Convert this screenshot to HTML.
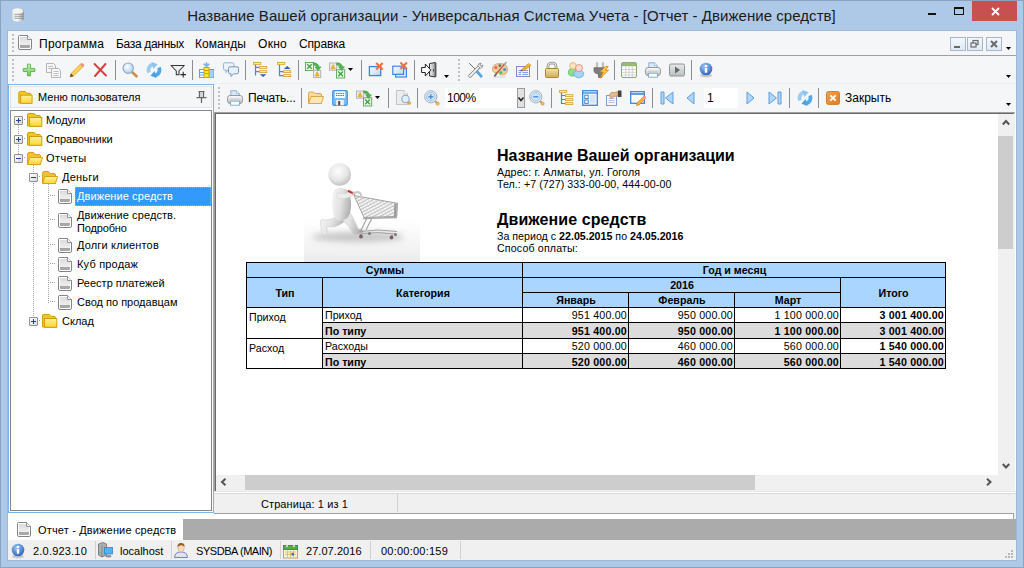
<!DOCTYPE html>
<html lang="ru"><head><meta charset="utf-8"><title>Универсальная Система Учета</title>
<style>
html,body{margin:0;padding:0}
html{background:#aec9e8}
body{width:1024px;height:568px;overflow:hidden;position:relative;background:#aec9e8;font-family:"Liberation Sans",sans-serif;color:#000}
.a{position:absolute}
.t{position:absolute;white-space:nowrap;line-height:1}
svg{overflow:visible}
#title{left:0;top:8px;width:1023px;text-align:center;font-size:15px;color:#1a1a1a;letter-spacing:0.05px}
.menu{font-size:12px}
.ui{font-size:11px}
.sep{position:absolute;width:1px;background:#8d8d8d}
.grip{position:absolute;width:2px;background:repeating-linear-gradient(to bottom,#c2c2c2 0,#c2c2c2 2px,transparent 2px,transparent 4px)}
.r{font-size:10.67px}
.rb{font-size:10.67px;font-weight:bold}
.cell{position:absolute;box-sizing:border-box;font-size:10.67px;line-height:12px;overflow:hidden;white-space:nowrap}
.dot-v{position:absolute;width:1px;background:repeating-linear-gradient(to bottom,#a0a0a0 0,#a0a0a0 1px,transparent 1px,transparent 2px)}
.dot-h{position:absolute;height:1px;background:repeating-linear-gradient(to right,#a0a0a0 0,#a0a0a0 1px,transparent 1px,transparent 2px)}
.exp{position:absolute;width:7px;height:7px;border:1px solid #919191;background:linear-gradient(135deg,#fff,#d8d8d8);border-radius:1px}
</style></head><body>
<svg width="0" height="0" style="position:absolute"><defs>
<linearGradient id="gFold" x1="0" y1="0" x2="0" y2="1"><stop offset="0" stop-color="#fff29a"/><stop offset="1" stop-color="#ffd52e"/></linearGradient>
<linearGradient id="gDoc" x1="0" y1="0" x2="0" y2="1"><stop offset="0" stop-color="#dcdcdc"/><stop offset="1" stop-color="#f6f6f6"/></linearGradient>
<linearGradient id="gBlue" x1="0" y1="0" x2="0" y2="1"><stop offset="0" stop-color="#8fc1f2"/><stop offset="1" stop-color="#2f76c9"/></linearGradient>
<linearGradient id="gWin" x1="0" y1="0" x2="1" y2="1"><stop offset="0" stop-color="#ffffff"/><stop offset="1" stop-color="#b8d4f2"/></linearGradient>
<linearGradient id="gLock" x1="0" y1="0" x2="0" y2="1"><stop offset="0" stop-color="#f3e2a4"/><stop offset="1" stop-color="#cfae55"/></linearGradient>
<linearGradient id="gPrn" x1="0" y1="0" x2="0" y2="1"><stop offset="0" stop-color="#fbfbfb"/><stop offset="0.5" stop-color="#e4e4e4"/><stop offset="1" stop-color="#b4b4b4"/></linearGradient>
<linearGradient id="gGreen" x1="0" y1="0" x2="0" y2="1"><stop offset="0" stop-color="#c9f0b8"/><stop offset="1" stop-color="#6cc95a"/></linearGradient>
<radialGradient id="gInfo" cx="0.4" cy="0.3" r="0.8"><stop offset="0" stop-color="#9cc6f5"/><stop offset="1" stop-color="#2458b8"/></radialGradient>
<radialGradient id="gLens" cx="0.4" cy="0.35" r="0.7"><stop offset="0" stop-color="#ffffff"/><stop offset="1" stop-color="#9fd2f6"/></radialGradient>
<linearGradient id="gGray" x1="0" y1="0" x2="0" y2="1"><stop offset="0" stop-color="#e6e9e8"/><stop offset="1" stop-color="#b9bfbd"/></linearGradient>
</defs></svg>
<div class="a" style="left:0px;top:0px;width:1022px;height:566px;border:1px solid #8aa3c4"></div>
<div class="a" style="left:7px;top:30px;width:1008px;height:529px;border:1px solid #9db8d9"></div>
<svg class="a" style="left:12px;top:8px" width="12" height="14" viewBox="0 0 12 14"><defs><linearGradient id="gDb" x1="0" y1="0" x2="1" y2="0"><stop offset="0" stop-color="#e4e4e4"/><stop offset="0.45" stop-color="#fbfbfb"/><stop offset="0.8" stop-color="#c9c9c9"/><stop offset="1" stop-color="#8e8e8e"/></linearGradient></defs><path d="M0.300 2.800 Q0.300 0.300 6 0.300 Q11.700 0.300 11.700 2.800 L11.700 11 Q11.700 13.500 6 13.500 Q0.300 13.500 0.300 11 Z" fill="url(#gDb)"/><path d="M2.500 6.300 H11 M2.500 8.300 H11 M2.500 10.300 H11" stroke="#777" stroke-width="0.800" opacity="0.850"/><ellipse cx="6" cy="3" rx="5.300" ry="2.300" fill="#f4f4f4" opacity="0.900"/></svg>
<div class="t" id="title">Название Вашей организации - Универсальная Система Учета - [Отчет - Движение средств]</div>
<div class="a" style="left:928px;top:13px;width:8px;height:2px;background:#111"></div>
<div class="a" style="left:954px;top:7px;width:8px;height:5px;border:1px solid #111;border-top-width:2px"></div>
<div class="a" style="left:972px;top:1px;width:45px;height:20px;background:#c75050"></div>
<svg class="a" style="left:990.5px;top:7px" width="9" height="9" viewBox="0 0 9 9"><path d="M1 1 L8 8 M8 1 L1 8" stroke="#fff" stroke-width="1.800"/></svg>
<div class="a" style="left:8px;top:31px;width:1008px;height:529px;background:#f0f0f0"></div>
<div class="a" style="left:8px;top:31px;width:1008px;height:24px;background:#f5f6f7"></div>
<div class="a" style="left:8px;top:55px;width:1008px;height:1px;background:#a0a0a0"></div>
<div class="grip" style="left:12px;top:34px;height:18px"></div>
<svg class="a" style="left:18px;top:35px" width="14" height="15" viewBox="0 0 14 15"><path d="M1.5 0.5 L9.5 0.5 L13.5 4.5 L13.5 13 Q13.5 14.5 12 14.5 L2 14.5 Q0.5 14.5 0.5 13 L0.5 1.5 Q0.5 0.5 1.5 0.5 Z" fill="#fff" stroke="#767676" stroke-width="0.900"/><path d="M2 2 L9 2 L9 5 L12 5 L12 13 L2 13 Z" fill="url(#gDoc)"/><path d="M9.5 0.5 L9.5 4.5 L13.5 4.5" fill="#fff" stroke="#777" stroke-width="0.8"/><rect x="2.5" y="10.5" width="9" height="2" fill="#aaa" stroke="#8a8a8a" stroke-width="0.6"/></svg>
<div class="t menu" style="left:39px;top:38px;;letter-spacing:0.25px">Программа</div>
<div class="t menu" style="left:116px;top:38px;;letter-spacing:-0.32px">База данных</div>
<div class="t menu" style="left:195px;top:38px;">Команды</div>
<div class="t menu" style="left:258px;top:38px;;letter-spacing:0.3px">Окно</div>
<div class="t menu" style="left:299px;top:38px;;letter-spacing:-0.15px">Справка</div>
<div class="a" style="left:950px;top:37px;width:14px;height:12px;border:1px solid #a9b7c9;background:linear-gradient(#f4f8fc,#dde9f6)"></div>
<svg class="a" style="left:950px;top:37px" width="16" height="14" viewBox="0 0 16 14"><rect x="4" y="9" width="6" height="2" fill="#6a6a6a"/></svg>
<div class="a" style="left:967px;top:37px;width:14px;height:12px;border:1px solid #a9b7c9;background:linear-gradient(#f4f8fc,#dde9f6)"></div>
<svg class="a" style="left:967px;top:37px" width="16" height="14" viewBox="0 0 16 14"><rect x="6" y="3.500" width="5" height="4" fill="none" stroke="#6a6a6a" stroke-width="1.200"/><rect x="4" y="6" width="5" height="4" fill="#e6eef8" stroke="#6a6a6a" stroke-width="1.200"/></svg>
<div class="a" style="left:986px;top:37px;width:14px;height:12px;border:1px solid #a9b7c9;background:linear-gradient(#f4f8fc,#dde9f6)"></div>
<svg class="a" style="left:986px;top:37px" width="16" height="14" viewBox="0 0 16 14"><path d="M5 4 L11 10 M11 4 L5 10" stroke="#6a6a6a" stroke-width="2"/></svg>
<svg class="a" style="left:1006px;top:47px" width="5" height="3" viewBox="0 0 5 3"><path d="M0 0 H5 L2.500 3 Z" fill="#000"/></svg>
<div class="a" style="left:8px;top:56px;width:1008px;height:28px;background:#f5f6f7"></div>
<div class="grip" style="left:12px;top:59px;height:22px"></div>
<svg class="a" style="left:21px;top:62px" width="16" height="16" viewBox="0 0 16 16"><path d="M6.200 1.500 Q8 0.800 9.800 1.500 L9.800 6.200 L14.500 6.200 Q15.200 8 14.500 9.800 L9.800 9.800 L9.800 14.500 Q8 15.200 6.200 14.500 L6.200 9.800 L1.500 9.800 Q0.800 8 1.500 6.200 L6.200 6.200 Z" fill="url(#gGreen)" stroke="#4aa83f" stroke-width="0.900" transform="translate(1 1) scale(0.875)"/></svg>
<svg class="a" style="left:45px;top:62px" width="16" height="16" viewBox="0 0 16 16"><path d="M1.5 1.5 L8.5 1.5 L10.5 3.5 L10.5 10.5 L1.5 10.5 Z" fill="#f6f6f6" stroke="#b4b4b4"/><path d="M3 4.5H8M3 6.500H8" stroke="#c0c0c0"/><path d="M6.500 6.500 L13.5 6.500 L15.5 8.500 L15.5 15.5 L6.500 15.5 Z" fill="#f9f9f9" stroke="#b4b4b4"/><path d="M8.500 9.500H13.5M8.500 11.5H13.5M8.500 13.5H13.5" stroke="#bdbdbd"/></svg>
<svg class="a" style="left:69px;top:62px" width="16" height="16" viewBox="0 0 16 16"><path d="M1 15 L2 11.600 L11.800 1.800 Q13.100 1 14.200 2.100 Q15.100 3.200 14.300 4.400 L4.500 14.100 Z" fill="#f9d35a" stroke="#dba52e" stroke-width="0.800"/><path d="M11.800 1.800 Q13.100 1 14.200 2.100 Q15.100 3.200 14.300 4.400 L13.500 5.200 L11 2.600 Z" fill="#ef9090"/><path d="M1 15 L2 11.600 L4.500 14.100 Z" fill="#4a4a4a"/></svg>
<svg class="a" style="left:92px;top:62px" width="16" height="16" viewBox="0 0 16 16"><path d="M2.500 2 L14 13.500 M13.500 2 L3 14" stroke="#d23f3f" stroke-width="1.900" stroke-linecap="round"/></svg>
<div class="sep" style="left:115px;top:60px;height:20px"></div>
<svg class="a" style="left:122px;top:62px" width="16" height="16" viewBox="0 0 16 16"><path d="M9.500 9.500 L14.500 14.300" stroke="#c98f4a" stroke-width="2.600" stroke-linecap="round"/><circle cx="6.200" cy="6.200" r="5.200" fill="url(#gLens)" stroke="#9aa9c4" stroke-width="1.200"/></svg>
<svg class="a" style="left:146px;top:62px" width="16" height="16" viewBox="0 0 16 16"><path d="M3 10.500 A5.400 5.400 0 0 1 7 2.700" stroke="#9bcdf3" stroke-width="3.800" fill="none"/><path d="M5.500 0 L11.500 2.200 L7.500 7 Z" fill="#8ac4f1"/><path d="M13 5.500 A5.400 5.400 0 0 1 9 13.300" stroke="#52a9ea" stroke-width="3.800" fill="none"/><path d="M10.500 16 L4.500 13.800 L8.500 9 Z" fill="#46a2e8"/></svg>
<svg class="a" style="left:170px;top:62px" width="16" height="16" viewBox="0 0 16 16"><path d="M1 3.500 L14.300 3.500 L9 9 L9 12.800 L6.300 12.800 L6.300 9 Z" fill="#f0f0f0" stroke="#333" stroke-width="1.050" stroke-linejoin="round"/><path d="M10.400 12.600H16M13.200 9.800V15.400" stroke="#2b2b2b" stroke-width="1.100"/></svg>
<div class="sep" style="left:192px;top:60px;height:20px"></div>
<svg class="a" style="left:199px;top:62px" width="16" height="16" viewBox="0 0 16 16"><rect x="0.500" y="7.500" width="14" height="8" fill="#fff" stroke="#5aa0e8"/><path d="M0.500 10.500H14.500M0.500 13H14.500M10 7.500V15.500" stroke="#5aa0e8"/><rect x="10.500" y="8" width="4" height="7.500" fill="#9fd0f5"/><rect x="5" y="5.500" width="5" height="10" fill="#ffe23d" stroke="#d6a400"/><path d="M5 8.500H10M5 11.500H10" stroke="#d6a400"/><path d="M7.500 0 V3 M4.500 2 L7.500 5 L10.500 2 Z" fill="#7fb2e6" stroke="#7fb2e6" stroke-width="1"/></svg>
<svg class="a" style="left:223px;top:62px" width="16" height="16" viewBox="0 0 16 16"><path d="M1.500 0.800 L9.500 0.800 Q11 0.800 11 2.300 L11 6.500 Q11 8 9.500 8 L5 8 L3 10.500 L3 8 L1.500 8 Q0.500 8 0.500 6.500 L0.500 2.300 Q0.500 0.800 1.500 0.800Z" fill="#eef4fb" stroke="#8fb0d8"/><path d="M7 4.800 L14 4.800 Q15.500 4.800 15.500 6.300 L15.500 10.300 Q15.500 11.800 14 11.800 L10.500 11.800 L8 14.500 L8 11.800 L7 11.800 Q5.500 11.800 5.500 10.300 L5.500 6.300 Q5.500 4.800 7 4.800Z" fill="#e8f0fa" stroke="#7398c9"/></svg>
<div class="sep" style="left:245px;top:60px;height:20px"></div>
<svg class="a" style="left:253px;top:62px" width="16" height="16" viewBox="0 0 16 16"><path d="M2.500 2.600 V13.600 M2.500 5.400 H6 M2.500 9.600 H6" stroke="#4a86d8" stroke-width="1.200" fill="none"/><rect x="0.45" y="0.45" width="7.300" height="1.900" fill="#fdf0c4" stroke="#dca93a" stroke-width="0.900"/><rect x="6.45" y="4.45" width="7.300" height="1.900" fill="#fdf0c4" stroke="#dca93a" stroke-width="0.900"/><rect x="6.45" y="8.649999999999999" width="7.300" height="1.900" fill="#fdf0c4" stroke="#dca93a" stroke-width="0.900"/><path d="M6.800 12.200 L13.400 12.200 L10.100 15 Z" fill="#2f62b8"/></svg>
<svg class="a" style="left:277px;top:62px" width="16" height="16" viewBox="0 0 16 16"><path d="M2.500 2.600 V13.600 H6 M2.500 9.600 H6" stroke="#4a86d8" stroke-width="1.200" fill="none"/><rect x="0.45" y="0.45" width="7.300" height="1.900" fill="#fdf0c4" stroke="#dca93a" stroke-width="0.900"/><rect x="6.45" y="8.649999999999999" width="7.300" height="1.900" fill="#fdf0c4" stroke="#dca93a" stroke-width="0.900"/><rect x="6.45" y="12.649999999999999" width="7.300" height="1.900" fill="#fdf0c4" stroke="#dca93a" stroke-width="0.900"/><path d="M6.800 6.900 L13.600 6.900 L10.200 4 Z" fill="#2f62b8"/></svg>
<div class="sep" style="left:298px;top:60px;height:20px"></div>
<svg class="a" style="left:305px;top:62px" width="16" height="16" viewBox="0 0 16 16"><rect x="0.5" y="0.5" width="8" height="8" fill="#eef8ec" stroke="#55a555" stroke-width="0.900"/><path d="M2.2 2.2 L6.8 6.8 M6.8 2.2 L2.2 6.8" stroke="#4a9f4a" stroke-width="1.400"/><rect x="8.5" y="8.3" width="7.2" height="7.2" fill="#ececec" stroke="#b5b5b5"/><path d="M12.1 9.8 L14.2 14.0 L10 14.0 Z" fill="#f2b632" stroke="#d99a1a" stroke-width="0.600"/><path d="M8.300 0.800 Q12.800 0.800 14.200 5 L16 5 L13 8.700 L10 5 L11.800 5 Q11 2.900 8.300 2.900 Z" fill="#56b552" stroke="#3a983a" stroke-width="0.600"/></svg>
<svg class="a" style="left:329px;top:62px" width="16" height="16" viewBox="0 0 16 16"><rect x="0.5" y="1.0" width="7.2" height="7.2" fill="#ececec" stroke="#b5b5b5"/><path d="M4.1 2.5 L6.2 6.7 L2 6.7 Z" fill="#f2b632" stroke="#d99a1a" stroke-width="0.600"/><rect x="7.5" y="7.8" width="8.2" height="8.2" fill="#eef8ec" stroke="#55a555" stroke-width="0.900"/><path d="M9.2 9.5 L14.0 14.3 M14.0 9.5 L9.2 14.3" stroke="#4a9f4a" stroke-width="1.400"/><path d="M7.800 0.800 Q12.300 0.800 13.700 4.800 L15.400 4.800 L12.500 8.400 L9.600 4.800 L11.300 4.800 Q10.500 2.900 7.800 2.900 Z" fill="#56b552" stroke="#3a983a" stroke-width="0.600"/></svg>
<div class="sep" style="left:361px;top:60px;height:20px"></div>
<svg class="a" style="left:368px;top:62px" width="16" height="16" viewBox="0 0 16 16"><rect x="1.400" y="4.600" width="11.300" height="9" fill="url(#gWin)" stroke="#3f86e0" stroke-width="1.300"/><path d="M8.2 1 L14.7 7.5 M14.7 1 L8.2 7.5" stroke="#e8714c" stroke-width="2"/></svg>
<svg class="a" style="left:392px;top:62px" width="16" height="16" viewBox="0 0 16 16"><rect x="3.600" y="6.800" width="10.800" height="8.200" fill="#e4effb" stroke="#3f86e0" stroke-width="1.200"/><rect x="0.800" y="4.200" width="10.800" height="8.200" fill="url(#gWin)" stroke="#3f86e0" stroke-width="1.200"/><path d="M8.4 0.5 L14.9 7.0 M14.9 0.5 L8.4 7.0" stroke="#e8714c" stroke-width="2"/></svg>
<div class="sep" style="left:414px;top:60px;height:20px"></div>
<svg class="a" style="left:421px;top:62px" width="16" height="16" viewBox="0 0 16 16"><defs><linearGradient id="gDoor" x1="0" y1="0" x2="1" y2="0"><stop offset="0" stop-color="#f2f2f2"/><stop offset="1" stop-color="#9c9c9c"/></linearGradient></defs><path d="M8.500 1.600 L14.300 0.500 L14.300 15 L8.500 14 Z" fill="url(#gDoor)" stroke="#333" stroke-width="1"/><path d="M14.300 0.500 L15 1.300 L15 14.300 L14.300 15" fill="#777" stroke="#333" stroke-width="0.700"/><rect x="12" y="7.200" width="1" height="2.200" fill="#444"/><path d="M0.600 5.500 L4.300 5.500 L4.300 2 L9.800 8 L4.300 14 L4.300 10.500 L0.600 10.500 Z" fill="#fff" stroke="#222" stroke-width="1" stroke-linejoin="miter"/></svg>
<div class="grip" style="left:458px;top:59px;height:22px"></div>
<svg class="a" style="left:468px;top:62px" width="16" height="16" viewBox="0 0 16 16"><path d="M1.500 1.500 L8.500 8.500" stroke="#6a6a6a" stroke-width="1" stroke-linecap="round"/><path d="M8.800 9.300 L13.200 14.200" stroke="#5ba3e6" stroke-width="2.800" stroke-linecap="round"/><path d="M2 14 L11.300 4.700" stroke="#808080" stroke-width="3.400" stroke-linecap="round"/><path d="M2 14 L11.300 4.700" stroke="#f6f6f6" stroke-width="1.800" stroke-linecap="round"/><path d="M9.800 3.800 Q10.300 1 13.200 1.200 L11.800 3 L13 4.300 L14.900 3 Q15 5.800 12.300 6.300 Z" fill="#f4f4f4" stroke="#808080" stroke-width="0.800"/></svg>
<svg class="a" style="left:492px;top:62px" width="16" height="16" viewBox="0 0 16 16"><path d="M8 1.500 Q15.500 1.500 15.500 7.500 Q15.500 13 9.500 13 Q7.300 13 7.300 11.500 Q7.300 10 5.300 10.500 Q0.500 11.500 0.500 7 Q0.500 1.500 8 1.500 Z" fill="#f0cc96" stroke="#c39a62" stroke-width="0.700"/><circle cx="3.800" cy="5.600" r="1.500" fill="#ee5a6a"/><circle cx="7.800" cy="3.600" r="1.400" fill="#6a6f7a"/><circle cx="12.600" cy="7.500" r="1.600" fill="#4a8fe6"/><circle cx="8.800" cy="10.500" r="1.500" fill="#4cc04c"/><circle cx="4" cy="9" r="1.200" fill="#f2e24a"/><path d="M14 0.300 L4.500 11.500" stroke="#c05a4a" stroke-width="1.300"/><path d="M14.500 0 L12.500 2.300" stroke="#b5b5b5" stroke-width="1.800"/><path d="M4.800 11 L2.300 14.800" stroke="#6a6a6a" stroke-width="1.800"/><path d="M2 15 H14" stroke="#c8c8c8" stroke-width="0.800"/></svg>
<svg class="a" style="left:516px;top:62px" width="16" height="16" viewBox="0 0 16 16"><rect x="0.500" y="4.500" width="13" height="10" fill="#f4f4ff" stroke="#8a86d0"/><path d="M2.500 8.500H5M6.500 8.500H12M2.500 10.500H5M6.500 10.500H12M2.500 12.500H5M6.500 12.500H12" stroke="#7f9fe0"/><path d="M5 8 L12.500 1.500 L15 3.500 L7 9 Z" fill="#f3b62e" stroke="#c8861a" stroke-width="0.700"/><path d="M4.200 9.200 L5 8 L7 9 Z" fill="#2a2ad0"/></svg>
<div class="sep" style="left:537px;top:60px;height:20px"></div>
<svg class="a" style="left:544px;top:62px" width="16" height="16" viewBox="0 0 16 16"><path d="M4 7.500 L4 4.500 Q4 1 8 1 Q12 1 12 4.500 L12 7.500" fill="none" stroke="#8c8c8c" stroke-width="2.600"/><path d="M4 7.500 L4 4.500 Q4 1 8 1 Q12 1 12 4.500 L12 7.500" fill="none" stroke="#e8e8e8" stroke-width="1.100"/><rect x="1.500" y="6.500" width="13" height="9" rx="1" fill="url(#gLock)" stroke="#a8853a"/></svg>
<svg class="a" style="left:568px;top:62px" width="16" height="16" viewBox="0 0 16 16"><ellipse cx="4.500" cy="10.300" rx="4.200" ry="3.800" fill="#8fdc88" stroke="#56b454" stroke-width="0.700"/><circle cx="5" cy="3.900" r="3.300" fill="#fbe6c4" stroke="#e6a55c" stroke-width="0.800"/><ellipse cx="10.800" cy="12" rx="5" ry="3.800" fill="#a9d2f8" stroke="#5a9be2" stroke-width="0.700"/><circle cx="11" cy="6" r="3.500" fill="#fcdcd4" stroke="#e8846e" stroke-width="0.800"/></svg>
<svg class="a" style="left:593px;top:62px" width="16" height="16" viewBox="0 0 16 16"><path d="M4 0.500 V6 M10 0.500 V6" stroke="#9a9a9a" stroke-width="2.200"/><path d="M4 0.800 V6 M10 0.800 V6" stroke="#ececec" stroke-width="0.900"/><path d="M1 5.800 L13 5.800 L13 8.500 Q13 11.500 9 12 L9 15.500 L5.500 15.500 L5.500 12 Q1 11.500 1 8.500 Z" fill="#7d7d7d" stroke="#5a5a5a" stroke-width="0.700"/><path d="M12.300 4.500 L7.300 10 L10.300 10 L7.500 15.800 L15.500 8.300 L12.300 8.300 L15.200 4.500 Z" fill="#ffd23f" stroke="#ee8420" stroke-width="0.900"/></svg>
<div class="sep" style="left:614px;top:60px;height:20px"></div>
<svg class="a" style="left:621px;top:62px" width="16" height="16" viewBox="0 0 16 16"><rect x="0.500" y="0.500" width="15" height="15" rx="1.500" fill="#fff" stroke="#7f9f62" stroke-width="0.900"/><path d="M0.800 2 Q0.800 0.800 2 0.800 L14 0.800 Q15.200 0.800 15.200 2 L15.200 4.300 L0.800 4.300 Z" fill="#98b87c"/><path d="M1 7.500H15M1 10.300H15M1 13H15M4.700 4.300V15M8 4.300V15M11.300 4.300V15" stroke="#cdcdcd" stroke-width="0.900"/></svg>
<svg class="a" style="left:645px;top:62px" width="16" height="16" viewBox="0 0 16 16"><path d="M3.800 6 L3.800 0.800 L9.500 0.800 L12.200 3.500 L12.200 6" fill="#dbe8f8" stroke="#7aa7e0" stroke-width="0.900"/><path d="M9.500 0.800 L9.500 3.500 L12.200 3.500" fill="#f6f9fd" stroke="#7aa7e0" stroke-width="0.600"/><rect x="0.600" y="5.500" width="14.800" height="8" rx="2.400" fill="url(#gPrn)" stroke="#8e8e8e" stroke-width="0.900"/><path d="M2.500 9.300 H13.500" stroke="#d0d0d0" stroke-width="1.400"/><rect x="3.600" y="11.200" width="8.800" height="4" fill="#fff" stroke="#7aa7e0" stroke-width="0.900"/></svg>
<svg class="a" style="left:669px;top:62px" width="16" height="16" viewBox="0 0 16 16"><rect x="0.500" y="2" width="15" height="12" rx="1.500" fill="url(#gGray)" stroke="#8c9694"/><path d="M6 4.500 L11 8 L6 11.500 Z" fill="#5f6b6a"/></svg>
<div class="sep" style="left:691px;top:60px;height:20px"></div>
<svg class="a" style="left:698px;top:62px" width="16" height="16" viewBox="0 0 16 16"><ellipse cx="8" cy="13.500" rx="6" ry="1.800" fill="#b5b5b5" opacity="0.700"/><circle cx="8" cy="7" r="6.300" fill="url(#gInfo)"/><rect x="6.800" y="3" width="2.400" height="2" rx="0.500" fill="#fff"/><rect x="6.800" y="6" width="2.400" height="4.800" rx="0.500" fill="#fff"/></svg>
<svg class="a" style="left:348px;top:68px" width="5" height="3" viewBox="0 0 5 3"><path d="M0 0 H5 L2.500 3 Z" fill="#000"/></svg>
<svg class="a" style="left:444px;top:75px" width="5" height="3" viewBox="0 0 5 3"><path d="M0 0 H5 L2.500 3 Z" fill="#000"/></svg>
<svg class="a" style="left:1006px;top:75px" width="5" height="3" viewBox="0 0 5 3"><path d="M0 0 H5 L2.500 3 Z" fill="#000"/></svg>
<div class="a" style="left:214px;top:83px;width:802px;height:1px;background:#ebecee"></div>
<div class="a" style="left:8px;top:84px;width:204px;height:427px;border:1px solid #7eb4ea;background:#fbfcfd"></div>
<div class="a" style="left:10px;top:86px;width:200px;height:20px;border:1px solid #e2e4e7;background:#f5f6f7"></div>
<svg class="a" style="left:18px;top:90.5px" width="15.5" height="13" viewBox="0 0 16 14"><path d="M0.500 13 L0.500 2 Q0.500 0.500 2 0.500 L7.300 0.500 L9.300 2.500 L12.500 2.500 Q13.500 2.500 13.500 3.500 L13.500 13 Z" fill="#f3c526" stroke="#cf9e08"/><rect x="2.500" y="4.500" width="12.300" height="8.800" fill="url(#gFold)" stroke="#cf9e08"/></svg>
<div class="t ui" style="left:38px;top:92px;">Меню пользователя</div>
<svg class="a" style="left:196px;top:91px" width="11" height="13" viewBox="0 0 11 13"><path d="M2.500 0.500 H8.500 M3.500 0.500 V6 M7.500 0.500 V6 M0.500 6.500 H10.500 M5.500 6.500 V12" stroke="#666" stroke-width="1.250" fill="none"/><rect x="4" y="1" width="3" height="5" fill="#d5d5d5"/></svg>
<div class="a" style="left:10px;top:110px;width:200px;height:399px;border:1px solid #828790;background:#fff"></div>
<div class="dot-v" style="left:18px;top:125px;height:29px"></div>
<div class="dot-h" style="left:24px;top:119px;width:2px"></div>
<div class="dot-h" style="left:24px;top:138px;width:2px"></div>
<div class="dot-h" style="left:24px;top:157px;width:2px"></div>
<div class="exp" style="left:14px;top:116px"></div>
<div class="a" style="left:16px;top:120px;width:5px;height:1px;background:#2a3f9a"></div>
<div class="a" style="left:18px;top:118px;width:1px;height:5px;background:#2a3f9a"></div>
<svg class="a" style="left:27px;top:113px" width="16" height="14" viewBox="0 0 16 14"><path d="M0.500 13 L0.500 2 Q0.500 0.500 2 0.500 L7.300 0.500 L9.300 2.500 L12.500 2.500 Q13.500 2.500 13.500 3.500 L13.500 13 Z" fill="#f3c526" stroke="#cf9e08"/><rect x="2.500" y="4.500" width="12.300" height="8.800" fill="url(#gFold)" stroke="#cf9e08"/></svg>
<div class="t ui" style="left:46px;top:115px;">Модули</div>
<div class="exp" style="left:14px;top:135px"></div>
<div class="a" style="left:16px;top:139px;width:5px;height:1px;background:#2a3f9a"></div>
<div class="a" style="left:18px;top:137px;width:1px;height:5px;background:#2a3f9a"></div>
<svg class="a" style="left:27px;top:132px" width="16" height="14" viewBox="0 0 16 14"><path d="M0.500 13 L0.500 2 Q0.500 0.500 2 0.500 L7.300 0.500 L9.300 2.500 L12.500 2.500 Q13.500 2.500 13.500 3.500 L13.500 13 Z" fill="#f3c526" stroke="#cf9e08"/><rect x="2.500" y="4.500" width="12.300" height="8.800" fill="url(#gFold)" stroke="#cf9e08"/></svg>
<div class="t ui" style="left:46px;top:134px;">Справочники</div>
<div class="exp" style="left:14px;top:154px"></div>
<div class="a" style="left:16px;top:158px;width:5px;height:1px;background:#2a3f9a"></div>
<svg class="a" style="left:27px;top:151px" width="16" height="14" viewBox="0 0 16 14"><path d="M0.5 3.5 Q0.5 1.5 2 1.5 L6 1.5 Q7.2 1.5 7.5 3 L7.7 3.5 L12 3.5 Q13.5 3.5 13.5 5 L13.5 13.5 L0.5 13.5 Z" fill="#f3c234" stroke="#d9a21b"/><path d="M2.8 6.5 L15.6 6.5 L13.4 13.5 L0.6 13.5 Z" fill="url(#gFold)" stroke="#d9a21b"/></svg>
<div class="t ui" style="left:46px;top:153px;;letter-spacing:0.41px">Отчеты</div>
<div class="dot-v" style="left:33px;top:165px;height:152px"></div>
<div class="dot-h" style="left:39px;top:176px;width:2px"></div>
<div class="dot-h" style="left:39px;top:320px;width:2px"></div>
<div class="exp" style="left:29px;top:173px"></div>
<div class="a" style="left:31px;top:177px;width:5px;height:1px;background:#2a3f9a"></div>
<svg class="a" style="left:42px;top:170px" width="16" height="14" viewBox="0 0 16 14"><path d="M0.5 3.5 Q0.5 1.5 2 1.5 L6 1.5 Q7.2 1.5 7.5 3 L7.7 3.5 L12 3.5 Q13.5 3.5 13.5 5 L13.5 13.5 L0.5 13.5 Z" fill="#f3c234" stroke="#d9a21b"/><path d="M2.8 6.5 L15.6 6.5 L13.4 13.5 L0.6 13.5 Z" fill="url(#gFold)" stroke="#d9a21b"/></svg>
<div class="t ui" style="left:62px;top:172px;;letter-spacing:0.24px">Деньги</div>
<div class="exp" style="left:29px;top:317px"></div>
<div class="a" style="left:31px;top:321px;width:5px;height:1px;background:#2a3f9a"></div>
<div class="a" style="left:33px;top:319px;width:1px;height:5px;background:#2a3f9a"></div>
<svg class="a" style="left:42px;top:314px" width="16" height="14" viewBox="0 0 16 14"><path d="M0.500 13 L0.500 2 Q0.500 0.500 2 0.500 L7.300 0.500 L9.300 2.500 L12.500 2.500 Q13.500 2.500 13.500 3.500 L13.500 13 Z" fill="#f3c526" stroke="#cf9e08"/><rect x="2.500" y="4.500" width="12.300" height="8.800" fill="url(#gFold)" stroke="#cf9e08"/></svg>
<div class="t ui" style="left:62px;top:316px;">Склад</div>
<div class="dot-v" style="left:48px;top:184px;height:119px"></div>
<div class="a" style="left:75px;top:187px;width:136px;height:19px;background:#3399ff;outline:1px dotted #d9a05a;outline-offset:-1px"></div>
<div class="dot-h" style="left:50px;top:195px;width:6px"></div>
<svg class="a" style="left:58px;top:189px" width="14" height="15" viewBox="0 0 14 15"><path d="M1.5 0.5 L9.5 0.5 L13.5 4.5 L13.5 13 Q13.5 14.5 12 14.5 L2 14.5 Q0.5 14.5 0.5 13 L0.5 1.5 Q0.5 0.5 1.5 0.5 Z" fill="#fff" stroke="#767676" stroke-width="0.900"/><path d="M2 2 L9 2 L9 5 L12 5 L12 13 L2 13 Z" fill="url(#gDoc)"/><path d="M9.5 0.5 L9.5 4.5 L13.5 4.5" fill="#fff" stroke="#777" stroke-width="0.8"/><rect x="2.5" y="10.5" width="9" height="2" fill="#aaa" stroke="#8a8a8a" stroke-width="0.6"/></svg>
<div class="t ui" style="left:77px;top:191px;color:#fff;letter-spacing:0.09px">Движение средств</div>
<div class="dot-h" style="left:50px;top:219px;width:6px"></div>
<svg class="a" style="left:58px;top:213px" width="14" height="15" viewBox="0 0 14 15"><path d="M1.5 0.5 L9.5 0.5 L13.5 4.5 L13.5 13 Q13.5 14.5 12 14.5 L2 14.5 Q0.5 14.5 0.5 13 L0.5 1.5 Q0.5 0.5 1.5 0.5 Z" fill="#fff" stroke="#767676" stroke-width="0.900"/><path d="M2 2 L9 2 L9 5 L12 5 L12 13 L2 13 Z" fill="url(#gDoc)"/><path d="M9.5 0.5 L9.5 4.5 L13.5 4.5" fill="#fff" stroke="#777" stroke-width="0.8"/><rect x="2.5" y="10.5" width="9" height="2" fill="#aaa" stroke="#8a8a8a" stroke-width="0.6"/></svg>
<div class="t ui" style="left:77px;top:210px;letter-spacing:0.09px">Движение средств.</div>
<div class="t ui" style="left:77px;top:223px;;letter-spacing:-0.15px">Подробно</div>
<div class="dot-h" style="left:50px;top:244px;width:6px"></div>
<svg class="a" style="left:58px;top:238px" width="14" height="15" viewBox="0 0 14 15"><path d="M1.5 0.5 L9.5 0.5 L13.5 4.5 L13.5 13 Q13.5 14.5 12 14.5 L2 14.5 Q0.5 14.5 0.5 13 L0.5 1.5 Q0.5 0.5 1.5 0.5 Z" fill="#fff" stroke="#767676" stroke-width="0.900"/><path d="M2 2 L9 2 L9 5 L12 5 L12 13 L2 13 Z" fill="url(#gDoc)"/><path d="M9.5 0.5 L9.5 4.5 L13.5 4.5" fill="#fff" stroke="#777" stroke-width="0.8"/><rect x="2.5" y="10.5" width="9" height="2" fill="#aaa" stroke="#8a8a8a" stroke-width="0.6"/></svg>
<div class="t ui" style="left:77px;top:240px;;letter-spacing:0.16px">Долги клиентов</div>
<div class="dot-h" style="left:50px;top:263px;width:6px"></div>
<svg class="a" style="left:58px;top:257px" width="14" height="15" viewBox="0 0 14 15"><path d="M1.5 0.5 L9.5 0.5 L13.5 4.5 L13.5 13 Q13.5 14.5 12 14.5 L2 14.5 Q0.5 14.5 0.5 13 L0.5 1.5 Q0.5 0.5 1.5 0.5 Z" fill="#fff" stroke="#767676" stroke-width="0.900"/><path d="M2 2 L9 2 L9 5 L12 5 L12 13 L2 13 Z" fill="url(#gDoc)"/><path d="M9.5 0.5 L9.5 4.5 L13.5 4.5" fill="#fff" stroke="#777" stroke-width="0.8"/><rect x="2.5" y="10.5" width="9" height="2" fill="#aaa" stroke="#8a8a8a" stroke-width="0.6"/></svg>
<div class="t ui" style="left:77px;top:259px;;letter-spacing:0.19px">Куб продаж</div>
<div class="dot-h" style="left:50px;top:282px;width:6px"></div>
<svg class="a" style="left:58px;top:276px" width="14" height="15" viewBox="0 0 14 15"><path d="M1.5 0.5 L9.5 0.5 L13.5 4.5 L13.5 13 Q13.5 14.5 12 14.5 L2 14.5 Q0.5 14.5 0.5 13 L0.5 1.5 Q0.5 0.5 1.5 0.5 Z" fill="#fff" stroke="#767676" stroke-width="0.900"/><path d="M2 2 L9 2 L9 5 L12 5 L12 13 L2 13 Z" fill="url(#gDoc)"/><path d="M9.5 0.5 L9.5 4.5 L13.5 4.5" fill="#fff" stroke="#777" stroke-width="0.8"/><rect x="2.5" y="10.5" width="9" height="2" fill="#aaa" stroke="#8a8a8a" stroke-width="0.6"/></svg>
<div class="t ui" style="left:77px;top:278px;">Реестр платежей</div>
<div class="dot-h" style="left:50px;top:301px;width:6px"></div>
<svg class="a" style="left:58px;top:295px" width="14" height="15" viewBox="0 0 14 15"><path d="M1.5 0.5 L9.5 0.5 L13.5 4.5 L13.5 13 Q13.5 14.5 12 14.5 L2 14.5 Q0.5 14.5 0.5 13 L0.5 1.5 Q0.5 0.5 1.5 0.5 Z" fill="#fff" stroke="#767676" stroke-width="0.900"/><path d="M2 2 L9 2 L9 5 L12 5 L12 13 L2 13 Z" fill="url(#gDoc)"/><path d="M9.5 0.5 L9.5 4.5 L13.5 4.5" fill="#fff" stroke="#777" stroke-width="0.8"/><rect x="2.5" y="10.5" width="9" height="2" fill="#aaa" stroke="#8a8a8a" stroke-width="0.6"/></svg>
<div class="t ui" style="left:77px;top:297px;">Свод по продавцам</div>
<div class="a" style="left:214px;top:84px;width:802px;height:28px;background:#f5f6f7"></div>
<div class="grip" style="left:218px;top:87px;height:22px"></div>
<svg class="a" style="left:227px;top:90px" width="16" height="16" viewBox="0 0 16 16"><path d="M3.800 6 L3.800 0.800 L9.500 0.800 L12.200 3.500 L12.200 6" fill="#dbe8f8" stroke="#7aa7e0" stroke-width="0.900"/><path d="M9.500 0.800 L9.500 3.500 L12.200 3.500" fill="#f6f9fd" stroke="#7aa7e0" stroke-width="0.600"/><rect x="0.600" y="5.500" width="14.800" height="8" rx="2.400" fill="url(#gPrn)" stroke="#8e8e8e" stroke-width="0.900"/><path d="M2.500 9.300 H13.500" stroke="#d0d0d0" stroke-width="1.400"/><rect x="3.600" y="11.200" width="8.800" height="4" fill="#fff" stroke="#7aa7e0" stroke-width="0.900"/></svg>
<div class="t menu" style="left:248px;top:92px;;letter-spacing:-0.2px">Печать...</div>
<div class="sep" style="left:301px;top:88px;height:20px"></div>
<svg class="a" style="left:308px;top:90px" width="16" height="16" viewBox="0 0 16 16"><path d="M0.500 3.500 Q0.500 2 2 2 L5.500 2 L7 3.500 L12 3.500 Q13.500 3.500 13.500 5 L13.500 13.500 L0.500 13.500 Z" fill="#f7dca0" stroke="#d9a84a"/><path d="M3 6.500 L15.600 6.500 L13.400 13.500 L0.600 13.500 Z" fill="#fbe7b5" stroke="#d9a84a"/></svg>
<svg class="a" style="left:332px;top:90px" width="16" height="16" viewBox="0 0 16 16"><path d="M0.700 2 Q0.700 0.700 2 0.700 L14 0.700 Q15.300 0.700 15.300 2 L15.300 14 Q15.300 15.300 14 15.300 L2 15.300 Q0.700 15.300 0.700 14 Z" fill="#79bdf3" stroke="#3f97e6" stroke-width="1.200"/><rect x="2.800" y="1.300" width="10.400" height="6.700" fill="#f6fafd"/><path d="M4 3.500H12M4 5.500H12" stroke="#5a6470" stroke-width="0.900" stroke-dasharray="1.500 0.700"/><rect x="4.200" y="10" width="7.600" height="5.300" fill="#f2f2f2"/><rect x="6.200" y="11" width="2" height="4.300" fill="#4a4a4a"/></svg>
<svg class="a" style="left:356px;top:90px" width="16" height="16" viewBox="0 0 16 16"><rect x="0.5" y="1.0" width="7.2" height="7.2" fill="#ececec" stroke="#b5b5b5"/><path d="M4.1 2.5 L6.2 6.7 L2 6.7 Z" fill="#f2b632" stroke="#d99a1a" stroke-width="0.600"/><rect x="7.5" y="7.8" width="8.2" height="8.2" fill="#eef8ec" stroke="#55a555" stroke-width="0.900"/><path d="M9.2 9.5 L14.0 14.3 M14.0 9.5 L9.2 14.3" stroke="#4a9f4a" stroke-width="1.400"/><path d="M7.800 0.800 Q12.300 0.800 13.700 4.800 L15.400 4.800 L12.500 8.400 L9.600 4.800 L11.300 4.800 Q10.500 2.900 7.800 2.900 Z" fill="#56b552" stroke="#3a983a" stroke-width="0.600"/></svg>
<div class="sep" style="left:388px;top:88px;height:20px"></div>
<svg class="a" style="left:396px;top:90px" width="16" height="16" viewBox="0 0 16 16"><path d="M0.500 0.500 L8 0.500 L11.500 4 L11.500 14.500 L0.500 14.500 Z" fill="#ececec" stroke="#c4c4c4"/><path d="M8 0.500 L8 4 L11.500 4" fill="#fafafa" stroke="#c4c4c4" stroke-width="0.800"/><circle cx="13.300" cy="13" r="1.500" fill="#f0b050" stroke="#d89030" stroke-width="0.500"/><circle cx="9.500" cy="9" r="3.700" fill="#dff0fc" stroke="#8fa6c6" stroke-width="1.100"/></svg>
<div class="sep" style="left:417px;top:88px;height:20px"></div>
<svg class="a" style="left:424px;top:90px" width="16" height="16" viewBox="0 0 16 16"><path d="M11 11 L13 13" stroke="#b9a58a" stroke-width="2" stroke-linecap="round"/><circle cx="13.600" cy="13.600" r="1.700" fill="#f3b556" stroke="#d9923a" stroke-width="0.500"/><circle cx="6.800" cy="6.800" r="6.100" fill="#e9eff5" stroke="#a4adb8" stroke-width="1"/><circle cx="6.800" cy="6.800" r="4.300" fill="#cbe5f8" stroke="#8dbbe6" stroke-width="0.800"/><path d="M4.300 6.800H9.300" stroke="#3f7fd4" stroke-width="1.200"/><path d="M6.800 4.300V9.300" stroke="#3f7fd4" stroke-width="1.200"/></svg>
<svg class="a" style="left:375px;top:96px" width="5" height="3" viewBox="0 0 5 3"><path d="M0 0 H5 L2.500 3 Z" fill="#000"/></svg>
<div class="a" style="left:445px;top:88px;width:79px;height:20px;background:#fff"></div>
<div class="t menu" style="left:447px;top:92px;;letter-spacing:-0.5px">100%</div>
<div class="a" style="left:517px;top:88px;width:6px;height:18px;border:1px solid #9a9a9a;background:#e1e1e1"></div>
<svg class="a" style="left:518px;top:97px" width="6" height="5" viewBox="0 0 6 5"><path d="M0.500 0.500 L3 3.500 L5.500 0.500" stroke="#222" stroke-width="1.500" fill="none"/></svg>
<svg class="a" style="left:529px;top:90px" width="16" height="16" viewBox="0 0 16 16"><path d="M11 11 L13 13" stroke="#b9a58a" stroke-width="2" stroke-linecap="round"/><circle cx="13.600" cy="13.600" r="1.700" fill="#f3b556" stroke="#d9923a" stroke-width="0.500"/><circle cx="6.800" cy="6.800" r="6.100" fill="#e9eff5" stroke="#a4adb8" stroke-width="1"/><circle cx="6.800" cy="6.800" r="4.300" fill="#cbe5f8" stroke="#8dbbe6" stroke-width="0.800"/><path d="M4.300 6.800H9.300" stroke="#3f7fd4" stroke-width="1.200"/></svg>
<div class="sep" style="left:551px;top:88px;height:20px"></div>
<svg class="a" style="left:559px;top:90px" width="16" height="16" viewBox="0 0 16 16"><path d="M2.500 2.600 V13.500 H6 M2.500 5.500 H6 M2.500 9.500 H6" stroke="#4a86d8" stroke-width="1.200" fill="none"/><rect x="0.45" y="0.45" width="7.300" height="1.900" fill="#fdf0c4" stroke="#dca93a" stroke-width="0.900"/><rect x="6.45" y="4.65" width="7.300" height="1.900" fill="#fdf0c4" stroke="#dca93a" stroke-width="0.900"/><rect x="6.45" y="8.649999999999999" width="7.300" height="1.900" fill="#fdf0c4" stroke="#dca93a" stroke-width="0.900"/><rect x="6.45" y="12.649999999999999" width="7.300" height="1.900" fill="#fdf0c4" stroke="#dca93a" stroke-width="0.900"/></svg>
<svg class="a" style="left:582px;top:90px" width="16" height="16" viewBox="0 0 16 16"><rect x="0.700" y="0.700" width="14.600" height="14.600" fill="#f2f8fe" stroke="#3f86d8" stroke-width="1.300"/><path d="M0.700 3 H15.300" stroke="#3f86d8" stroke-width="1.300"/><rect x="2.800" y="5.200" width="3.400" height="3.400" fill="#fff" stroke="#3f86d8"/><rect x="2.800" y="10" width="3.400" height="3.400" fill="#fff" stroke="#3f86d8"/><rect x="8" y="5" width="5.500" height="8.500" fill="#d5e6f8"/></svg>
<svg class="a" style="left:606px;top:90px" width="16" height="16" viewBox="0 0 16 16"><rect x="0.500" y="5.500" width="10" height="10" fill="#f4f6fa" stroke="#7f9fd0"/><path d="M2.500 8.500H8.500M2.500 10.500H8.500M2.500 12.500H8.500" stroke="#b5c5e0"/><path d="M3 5 Q5 1 9 2.500 L12 1.500 L12 6 L8 6.500 L5 8.500 Z" fill="#e5b98a" stroke="#b98a5a" stroke-width="0.700"/><rect x="12" y="0.500" width="3.500" height="6.500" fill="#444"/></svg>
<svg class="a" style="left:630px;top:90px" width="16" height="16" viewBox="0 0 16 16"><rect x="0.700" y="1.700" width="13.600" height="11.600" fill="#fff" stroke="#3f86d8" stroke-width="1.300"/><path d="M0.700 4 H14.300" stroke="#3f86d8" stroke-width="1.600"/><path d="M7 13 L13.500 6.500 L15.500 8.500 L9 15 L6.500 15.500 Z" fill="#f3b62e" stroke="#c8861a" stroke-width="0.700"/><path d="M13 7 L14 6 Q15 5.500 15.800 6.500 L16 7 L15 8.500 Z" fill="#ee8f8f"/></svg>
<div class="sep" style="left:652px;top:88px;height:20px"></div>
<svg class="a" style="left:660px;top:90px" width="16" height="16" viewBox="0 0 16 16"><rect x="1" y="2" width="3" height="12" fill="#b2d5f6" stroke="#5b9fe3" stroke-width="1" stroke-linejoin="round"/><path d="M13 2 L13 14 L5.500 8 Z" fill="#b2d5f6" stroke="#5b9fe3" stroke-width="1" stroke-linejoin="round"/></svg>
<svg class="a" style="left:684px;top:90px" width="16" height="16" viewBox="0 0 16 16"><path d="M10 2 L10 14 L3 8 Z" fill="#b2d5f6" stroke="#5b9fe3" stroke-width="1" stroke-linejoin="round"/></svg>
<div class="a" style="left:704px;top:88px;width:34px;height:20px;background:#fff"></div>
<div class="t menu" style="left:707px;top:92px;">1</div>
<svg class="a" style="left:743px;top:90px" width="16" height="16" viewBox="0 0 16 16"><path d="M4 2 L4 14 L11 8 Z" fill="#b2d5f6" stroke="#5b9fe3" stroke-width="1" stroke-linejoin="round"/></svg>
<svg class="a" style="left:768px;top:90px" width="16" height="16" viewBox="0 0 16 16"><rect x="10" y="2" width="3" height="12" fill="#b2d5f6" stroke="#5b9fe3" stroke-width="1" stroke-linejoin="round"/><path d="M1 2 L1 14 L8.500 8 Z" fill="#b2d5f6" stroke="#5b9fe3" stroke-width="1" stroke-linejoin="round"/></svg>
<div class="sep" style="left:789px;top:88px;height:20px"></div>
<svg class="a" style="left:797px;top:90px" width="16" height="16" viewBox="0 0 16 16"><path d="M3 10.500 A5.400 5.400 0 0 1 7 2.700" stroke="#9bcdf3" stroke-width="3.800" fill="none"/><path d="M5.500 0 L11.500 2.200 L7.500 7 Z" fill="#8ac4f1"/><path d="M13 5.500 A5.400 5.400 0 0 1 9 13.300" stroke="#52a9ea" stroke-width="3.800" fill="none"/><path d="M10.500 16 L4.500 13.800 L8.500 9 Z" fill="#46a2e8"/></svg>
<div class="sep" style="left:818px;top:88px;height:20px"></div>
<svg class="a" style="left:826px;top:91px" width="14" height="14" viewBox="0 0 14 14"><defs><linearGradient id="gClo" x1="0" y1="0" x2="1" y2="1"><stop offset="0" stop-color="#f0a352"/><stop offset="1" stop-color="#dc7a26"/></linearGradient></defs><rect x="0.500" y="0.500" width="13" height="13" rx="2" fill="url(#gClo)" stroke="#d38034"/><path d="M4.300 4.300 L9.700 9.700 M9.700 4.300 L4.300 9.700" stroke="#fff" stroke-width="1.900"/></svg>
<div class="t menu" style="left:845px;top:92px;">Закрыть</div>
<svg class="a" style="left:1006px;top:103px" width="5" height="3" viewBox="0 0 5 3"><path d="M0 0 H5 L2.500 3 Z" fill="#000"/></svg>
<div class="a" style="left:214px;top:112px;width:801px;height:1px;background:#a0a0a0"></div>
<div class="a" style="left:214px;top:112px;width:1px;height:379px;background:#a0a0a0"></div>
<div class="a" style="left:215px;top:113px;width:799px;height:1px;background:#696969"></div>
<div class="a" style="left:1015px;top:112px;width:1px;height:380px;background:#fff"></div>
<div class="a" style="left:215px;top:113px;width:1px;height:378px;background:#696969"></div>
<div class="a" style="left:216px;top:114px;width:782px;height:361px;background:#fff"></div>
<div class="a" style="left:998px;top:114px;width:17px;height:361px;background:#f0f0f0"></div>
<div class="a" style="left:998px;top:136px;width:15px;height:113px;background:#cdcdcd"></div>
<svg class="a" style="left:1002px;top:119px" width="8" height="8" viewBox="0 0 8 8"><path d="M0.800 5.500 L4 2 L7.200 5.500" stroke="#555" stroke-width="2" fill="none"/></svg>
<svg class="a" style="left:1002px;top:462px" width="8" height="8" viewBox="0 0 8 8"><path d="M0.800 2 L4 5.500 L7.200 2" stroke="#555" stroke-width="2" fill="none"/></svg>
<div class="a" style="left:216px;top:475px;width:799px;height:16px;background:#f0f0f0"></div>
<div class="a" style="left:245px;top:475px;width:510px;height:15px;background:#cdcdcd"></div>
<svg class="a" style="left:220px;top:478px" width="8" height="8" viewBox="0 0 8 8"><path d="M5.500 0.800 L2 4 L5.500 7.200" stroke="#555" stroke-width="2" fill="none"/></svg>
<svg class="a" style="left:985px;top:478px" width="8" height="8" viewBox="0 0 8 8"><path d="M2 0.800 L5.500 4 L2 7.200" stroke="#555" stroke-width="2" fill="none"/></svg>
<div class="a" style="left:214px;top:491px;width:802px;height:1px;background:#e6e6e6"></div>
<div class="a" style="left:214px;top:492px;width:802px;height:1px;background:#fff"></div>
<div class="a" style="left:214px;top:493px;width:802px;height:1px;background:#d9d9d9"></div>
<div class="t ui" style="left:261px;top:499px;;letter-spacing:0.09px">Страница: 1 из 1</div>
<div class="a" style="left:397px;top:494px;width:1px;height:18px;background:#d0d0d0"></div>
<svg class="a" style="left:296px;top:140px" width="136" height="122" viewBox="296 140 136 122">
<defs>
<linearGradient id="lgBg" x1="0" y1="0" x2="0" y2="1"><stop offset="0" stop-color="#ffffff"/><stop offset="0.62" stop-color="#ffffff"/><stop offset="0.8" stop-color="#f7f7f7"/><stop offset="1" stop-color="#ececec"/></linearGradient>
<radialGradient id="lgHead" cx="0.42" cy="0.35" r="0.75"><stop offset="0" stop-color="#fdfdfd"/><stop offset="0.55" stop-color="#e6e6e6"/><stop offset="1" stop-color="#b2b2b2"/></radialGradient>
<linearGradient id="lgBody" x1="0" y1="0" x2="1" y2="0.3"><stop offset="0" stop-color="#f6f6f6"/><stop offset="0.55" stop-color="#e2e2e2"/><stop offset="1" stop-color="#b4b4b4"/></linearGradient>
<filter id="blur3" x="-30%" y="-80%" width="160%" height="260%"><feGaussianBlur stdDeviation="3"/></filter>
<filter id="blur05"><feGaussianBlur stdDeviation="0.45"/></filter>
<pattern id="mesh" width="3" height="3" patternUnits="userSpaceOnUse" patternTransform="rotate(-28)"><rect width="3" height="3" fill="#f8f8f8"/><path d="M0 0.500H3" stroke="#a6a6a6" stroke-width="0.700"/><path d="M0.500 0V3" stroke="#c2c2c2" stroke-width="0.450"/></pattern>
</defs>
<rect x="304" y="150" width="116" height="112" fill="url(#lgBg)"/>
<ellipse cx="358" cy="237" rx="46" ry="5" fill="#bcbcbc" filter="url(#blur3)" opacity="0.850"/>
<g filter="url(#blur05)">
<!-- back leg -->
<path d="M339 214 Q330 222 322 219.500 Q319.500 220 320.500 224 L322 233 Q323 236 326 234.500 Q328 233 327 229 L327 226.500 Q336 229 345 221 Z" fill="url(#lgBody)" stroke="#c8c8c8" stroke-width="0.500"/>
<!-- front leg -->
<path d="M338 212 Q346 206 351 214 Q356 223 358 229 Q362 228.500 363.500 231 Q363 234.500 358 234.500 L353 234.500 Q350 226 344 222 Z" fill="url(#lgBody)" stroke="#c8c8c8" stroke-width="0.500"/>
<!-- torso -->
<path d="M334 190 Q340 185 347 190 Q352 198 351 208 Q350 219 342 221 Q334 221 333 212 Q331 200 334 190 Z" fill="url(#lgBody)"/>
<!-- arm -->
<path d="M337 193 Q344 195 351 191.500 Q354 190.500 355 192.500 Q355 195 351 196.500 Q343 200 337 198 Z" fill="#ededed" stroke="#c9c9c9" stroke-width="0.400"/>
<!-- head -->
<circle cx="339.700" cy="174.500" r="11.300" fill="url(#lgHead)"/>
<!-- cart -->
<path d="M354 195.500 L397.500 203.300 L396.800 216.400 L364 217.500 Z" fill="url(#mesh)" stroke="#9a9a9a" stroke-width="0.900"/>
<path d="M395.500 203.500 L395.200 216.500" stroke="#9a9a9a" stroke-width="2.400"/>
<path d="M363 218.500 L397 217.500" stroke="#a8a8a8" stroke-width="1.400"/>
<path d="M367 218 L360 232.500 M372 218 L366 230" stroke="#a5a5a5" stroke-width="1.200" fill="none"/>
<path d="M360 231.500 Q378 228.500 397 231.500 M362 233.500 Q378 231.500 395 234" stroke="#a0a0a0" stroke-width="1" fill="none"/>
<path d="M348.500 191 L354 193.800" stroke="#d62b2b" stroke-width="2" stroke-linecap="round"/>
<path d="M353.500 193.500 Q357 191 360 193 Q361.500 194.500 361 197" stroke="#c8c8c8" stroke-width="2.200" fill="none" stroke-linecap="round"/>
<circle cx="361" cy="236.500" r="1.900" fill="#6a6a6a"/><circle cx="369.500" cy="233.500" r="1.500" fill="#7a7a7a"/>
<circle cx="391.500" cy="237.500" r="1.900" fill="#6a6a6a"/><circle cx="395.500" cy="234.500" r="1.500" fill="#7a7a7a"/>
<circle cx="361" cy="235" r="0.800" fill="#d03030"/><circle cx="392" cy="236" r="0.800" fill="#d03030"/>
</g>
</svg>
<div class="t " style="left:497px;top:148px;font-size:16px;font-weight:bold">Название Вашей организации</div>
<div class="t r" style="left:497px;top:167px;;letter-spacing:0.14px">Адрес: г. Алматы, ул. Гоголя</div>
<div class="t r" style="left:497px;top:179px;;letter-spacing:0.05px">Тел.: +7 (727) 333-00-00, 444-00-00</div>
<div class="t " style="left:497px;top:212px;font-size:16px;font-weight:bold;letter-spacing:0.09px">Движение средств</div>
<div class="t r" style="left:497px;top:231px;">За период с <b>22.05.2015</b> по <b>24.05.2016</b></div>
<div class="t r" style="left:497px;top:243px;;letter-spacing:0.14px">Способ оплаты:</div>
<div class="cell" style="left:246px;top:262px;width:277px;height:16px;border:1px solid #000;background:#aad5ff;text-align:center;font-weight:bold;padding:1px 1px 0 2px;">Суммы</div>
<div class="cell" style="left:522px;top:262px;width:424px;height:16px;border:1px solid #000;background:#aad5ff;text-align:center;font-weight:bold;padding:1px 1px 0 2px;">Год и месяц</div>
<div class="cell" style="left:246px;top:277px;width:77px;height:31px;border:1px solid #000;background:#aad5ff;text-align:center;font-weight:bold;padding:9px 1px 0 2px;">Тип</div>
<div class="cell" style="left:322px;top:277px;width:201px;height:31px;border:1px solid #000;background:#aad5ff;text-align:center;font-weight:bold;padding:9px 1px 0 2px;">Категория</div>
<div class="cell" style="left:522px;top:277px;width:319px;height:16px;border:1px solid #000;background:#aad5ff;text-align:center;font-weight:bold;padding:1px 1px 0 2px;">2016</div>
<div class="cell" style="left:840px;top:277px;width:106px;height:31px;border:1px solid #000;background:#aad5ff;text-align:center;font-weight:bold;padding:9px 1px 0 2px;">Итого</div>
<div class="cell" style="left:522px;top:292px;width:107px;height:16px;border:1px solid #000;background:#aad5ff;text-align:center;font-weight:bold;padding:1px 1px 0 2px;">Январь</div>
<div class="cell" style="left:628px;top:292px;width:107px;height:16px;border:1px solid #000;background:#aad5ff;text-align:center;font-weight:bold;padding:1px 1px 0 2px;">Февраль</div>
<div class="cell" style="left:734px;top:292px;width:107px;height:16px;border:1px solid #000;background:#aad5ff;text-align:center;font-weight:bold;padding:1px 1px 0 2px;">Март</div>
<div class="cell" style="left:246px;top:307px;width:77px;height:32px;border:1px solid #000;background:#fff;text-align:left;padding:3px 1px 0 2px;">Приход</div>
<div class="cell" style="left:322px;top:307px;width:201px;height:16px;border:1px solid #000;background:#fff;text-align:left;padding:1px 1px 0 2px;">Приход</div>
<div class="cell" style="left:322px;top:322px;width:201px;height:17px;border:1px solid #000;background:#dcdcdc;text-align:left;font-weight:bold;padding:2px 1px 0 2px;">По типу</div>
<div class="cell" style="left:522px;top:307px;width:107px;height:16px;border:1px solid #000;background:#fff;text-align:right;padding:1px 1px 0 2px;letter-spacing:0.2px;">951 400.00</div>
<div class="cell" style="left:522px;top:322px;width:107px;height:17px;border:1px solid #000;background:#dcdcdc;text-align:right;font-weight:bold;padding:2px 1px 0 2px;letter-spacing:0.2px;">951 400.00</div>
<div class="cell" style="left:628px;top:307px;width:107px;height:16px;border:1px solid #000;background:#fff;text-align:right;padding:1px 1px 0 2px;letter-spacing:0.2px;">950 000.00</div>
<div class="cell" style="left:628px;top:322px;width:107px;height:17px;border:1px solid #000;background:#dcdcdc;text-align:right;font-weight:bold;padding:2px 1px 0 2px;letter-spacing:0.2px;">950 000.00</div>
<div class="cell" style="left:734px;top:307px;width:107px;height:16px;border:1px solid #000;background:#fff;text-align:right;padding:1px 1px 0 2px;letter-spacing:0.2px;">1 100 000.00</div>
<div class="cell" style="left:734px;top:322px;width:107px;height:17px;border:1px solid #000;background:#dcdcdc;text-align:right;font-weight:bold;padding:2px 1px 0 2px;letter-spacing:0.2px;">1 100 000.00</div>
<div class="cell" style="left:840px;top:307px;width:106px;height:16px;border:1px solid #000;background:#fff;text-align:right;font-weight:bold;padding:1px 1px 0 2px;letter-spacing:0.2px;">3 001 400.00</div>
<div class="cell" style="left:840px;top:322px;width:106px;height:17px;border:1px solid #000;background:#dcdcdc;text-align:right;font-weight:bold;padding:2px 1px 0 2px;letter-spacing:0.2px;">3 001 400.00</div>
<div class="cell" style="left:246px;top:338px;width:77px;height:31px;border:1px solid #000;background:#fff;text-align:left;padding:3px 1px 0 2px;">Расход</div>
<div class="cell" style="left:322px;top:338px;width:201px;height:16px;border:1px solid #000;background:#fff;text-align:left;padding:1px 1px 0 2px;">Расходы</div>
<div class="cell" style="left:322px;top:353px;width:201px;height:16px;border:1px solid #000;background:#dcdcdc;text-align:left;font-weight:bold;padding:2px 1px 0 2px;">По типу</div>
<div class="cell" style="left:522px;top:338px;width:107px;height:16px;border:1px solid #000;background:#fff;text-align:right;padding:1px 1px 0 2px;letter-spacing:0.2px;">520 000.00</div>
<div class="cell" style="left:522px;top:353px;width:107px;height:16px;border:1px solid #000;background:#dcdcdc;text-align:right;font-weight:bold;padding:2px 1px 0 2px;letter-spacing:0.2px;">520 000.00</div>
<div class="cell" style="left:628px;top:338px;width:107px;height:16px;border:1px solid #000;background:#fff;text-align:right;padding:1px 1px 0 2px;letter-spacing:0.2px;">460 000.00</div>
<div class="cell" style="left:628px;top:353px;width:107px;height:16px;border:1px solid #000;background:#dcdcdc;text-align:right;font-weight:bold;padding:2px 1px 0 2px;letter-spacing:0.2px;">460 000.00</div>
<div class="cell" style="left:734px;top:338px;width:107px;height:16px;border:1px solid #000;background:#fff;text-align:right;padding:1px 1px 0 2px;letter-spacing:0.2px;">560 000.00</div>
<div class="cell" style="left:734px;top:353px;width:107px;height:16px;border:1px solid #000;background:#dcdcdc;text-align:right;font-weight:bold;padding:2px 1px 0 2px;letter-spacing:0.2px;">560 000.00</div>
<div class="cell" style="left:840px;top:338px;width:106px;height:16px;border:1px solid #000;background:#fff;text-align:right;font-weight:bold;padding:1px 1px 0 2px;letter-spacing:0.2px;">1 540 000.00</div>
<div class="cell" style="left:840px;top:353px;width:106px;height:16px;border:1px solid #000;background:#dcdcdc;text-align:right;font-weight:bold;padding:2px 1px 0 2px;letter-spacing:0.2px;">1 540 000.00</div>
<div class="a" style="left:8px;top:513px;width:1008px;height:27px;background:#fff"></div>
<div class="a" style="left:214px;top:513px;width:800px;height:1px;background:#a0a0a0"></div>
<div class="a" style="left:1013px;top:514px;width:1px;height:6px;background:#a0a0a0"></div>
<div class="a" style="left:1014px;top:513px;width:2px;height:7px;background:#f0f0f0"></div>
<div class="a" style="left:183px;top:519px;width:833px;height:21px;background:#ababab"></div>
<svg class="a" style="left:17px;top:522px" width="14" height="15" viewBox="0 0 14 15"><path d="M1.5 0.5 L9.5 0.5 L13.5 4.5 L13.5 13 Q13.5 14.5 12 14.5 L2 14.5 Q0.5 14.5 0.5 13 L0.5 1.5 Q0.5 0.5 1.5 0.5 Z" fill="#fff" stroke="#767676" stroke-width="0.900"/><path d="M2 2 L9 2 L9 5 L12 5 L12 13 L2 13 Z" fill="url(#gDoc)"/><path d="M9.5 0.5 L9.5 4.5 L13.5 4.5" fill="#fff" stroke="#777" stroke-width="0.8"/><rect x="2.5" y="10.5" width="9" height="2" fill="#aaa" stroke="#8a8a8a" stroke-width="0.6"/></svg>
<div class="t ui" style="left:38px;top:525px;;letter-spacing:0.16px">Отчет - Движение средств</div>
<div class="a" style="left:8px;top:540px;width:1008px;height:20px;background:#f0f0f0"></div>
<svg class="a" style="left:10px;top:543px" width="16" height="16" viewBox="0 0 16 16"><ellipse cx="8" cy="13.500" rx="6" ry="1.800" fill="#b5b5b5" opacity="0.700"/><circle cx="8" cy="7" r="6.300" fill="url(#gInfo)"/><rect x="6.800" y="3" width="2.400" height="2" rx="0.500" fill="#fff"/><rect x="6.800" y="6" width="2.400" height="4.800" rx="0.500" fill="#fff"/></svg>
<div class="t ui" style="left:33px;top:546px;;letter-spacing:0.2px">2.0.923.10</div>
<svg class="a" style="left:97px;top:542px" width="16" height="16" viewBox="0 0 16 16"><path d="M1.500 2 L6 0.500 L9.500 2 L9.500 13 L5 15 L1.500 13 Z" fill="#a9aeb2" stroke="#6a6f73" stroke-width="0.800"/><path d="M5 3.500 L5 15" stroke="#6a6f73" stroke-width="0.600"/><rect x="7.500" y="5.500" width="8" height="6.500" fill="#4fb4f4" stroke="#2f86d0" stroke-width="0.800"/><ellipse cx="11.500" cy="14.200" rx="3" ry="1.200" fill="#8a8f93"/><rect x="2.500" y="10" width="1.200" height="1.200" fill="#3fd03f"/></svg>
<div class="t ui" style="left:120px;top:546px;">localhost</div>
<svg class="a" style="left:174px;top:542px" width="14" height="16" viewBox="0 0 14 16"><path d="M0.500 15.500 L1 13 Q2 10.500 5.500 10 L8.500 10 Q12 10.500 13 13 L13.500 15.500 Z" fill="#dfe3f4" stroke="#6a72c0" stroke-width="0.900"/><ellipse cx="7" cy="6" rx="3.200" ry="4" fill="#f8d8b8" stroke="#d8a070" stroke-width="0.500"/><path d="M3.500 5.500 Q3 1 7 1 Q11 1 10.500 5 Q9 2.500 6 3.500 Q4 4 3.500 5.500Z" fill="#9a5a20"/></svg>
<div class="t ui" style="left:196px;top:546px;;letter-spacing:-0.45px">SYSDBA (MAIN)</div>
<svg class="a" style="left:283px;top:543px" width="15" height="15" viewBox="0 0 15 15"><rect x="0.500" y="2.500" width="14" height="12.500" fill="#fdf3d8" stroke="#c8a060"/><rect x="0.500" y="2.500" width="14" height="4" fill="#4fb04a" stroke="#3a963a"/><path d="M4 1 V4 M11 1 V4" stroke="#e8e8e8" stroke-width="1.600"/><path d="M2 9H13M2 11.500H13M4.500 7.500V14M7.500 7.500V14M10.500 7.500V14" stroke="#d9b36a" stroke-width="0.800"/><rect x="8.500" y="10" width="2.500" height="2.500" fill="#2f6fe0"/></svg>
<div class="t ui" style="left:306px;top:546px;;letter-spacing:0.05px">27.07.2016</div>
<div class="t ui" style="left:381px;top:546px;;letter-spacing:0.23px">00:00:00:159</div>
<div class="a" style="left:95px;top:541px;width:1px;height:18px;background:#d0d0d0"></div>
<div class="a" style="left:171px;top:541px;width:1px;height:18px;background:#d0d0d0"></div>
<div class="a" style="left:280px;top:541px;width:1px;height:18px;background:#d0d0d0"></div>
<div class="a" style="left:370px;top:541px;width:1px;height:18px;background:#d0d0d0"></div>
<div class="a" style="left:460px;top:541px;width:1px;height:18px;background:#d0d0d0"></div>
<div class="a" style="left:1005px;top:556px;width:2px;height:2px;background:#b8b8b8"></div>
<div class="a" style="left:1008px;top:556px;width:2px;height:2px;background:#b8b8b8"></div>
<div class="a" style="left:1011px;top:556px;width:2px;height:2px;background:#b8b8b8"></div>
<div class="a" style="left:1008px;top:553px;width:2px;height:2px;background:#b8b8b8"></div>
<div class="a" style="left:1011px;top:553px;width:2px;height:2px;background:#b8b8b8"></div>
<div class="a" style="left:1011px;top:550px;width:2px;height:2px;background:#b8b8b8"></div>
</body></html>
